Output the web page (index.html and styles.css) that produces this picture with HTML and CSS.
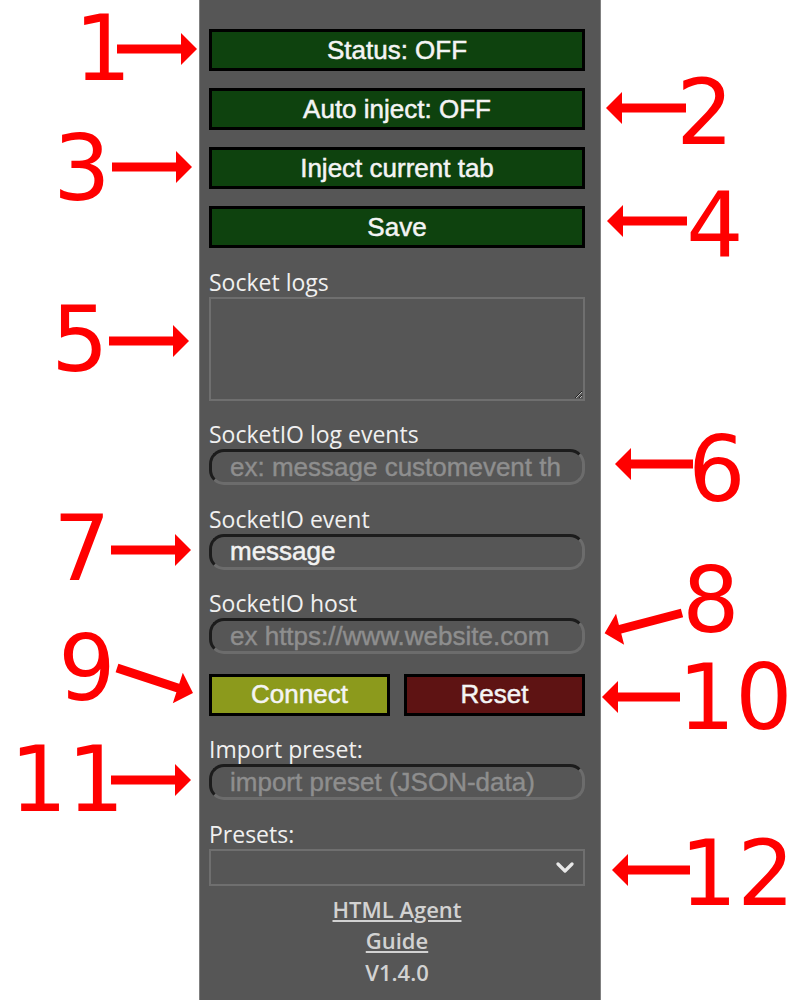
FILE: index.html
```html
<!DOCTYPE html>
<html lang="en">
<head>
<meta charset="utf-8">
<title>HTML Agent</title>
<link rel="stylesheet" href="styles.css">
</head>
<body>
<div class="page">
  <main class="panel">
    <div class="btn-stack">
      <button class="btn green">Status: OFF</button>
      <button class="btn green">Auto inject: OFF</button>
      <button class="btn green">Inject current tab</button>
      <button class="btn green">Save</button>
    </div>
    <div class="fields">
      <div class="field">
        <label class="lbl">Socket logs</label>
        <textarea class="logs"></textarea>
      </div>
      <div class="field">
        <label class="lbl">SocketIO log events</label>
        <input class="inp" type="text" placeholder="ex: message customevent th">
      </div>
      <div class="field">
        <label class="lbl">SocketIO event</label>
        <input class="inp" type="text" value="message">
      </div>
      <div class="field">
        <label class="lbl">SocketIO host</label>
        <input class="inp" type="text" placeholder="ex https://www.website.com">
      </div>
      <div class="btn-row">
        <button class="btn olive">Connect</button>
        <button class="btn red">Reset</button>
      </div>
      <div class="field">
        <label class="lbl">Import preset:</label>
        <input class="inp" type="text" placeholder="import preset (JSON-data)">
      </div>
      <div class="field">
        <label class="lbl">Presets:</label>
        <div class="select-wrap">
          <select class="sel"><option></option></select>
          <svg class="chev" width="18" height="12" viewBox="0 0 18 12"><path d="M2 2 L9 9 L16 2" fill="none" stroke="#e8e8e8" stroke-width="3.2" stroke-linecap="round" stroke-linejoin="round"/></svg>
        </div>
      </div>
    </div>
    <footer class="foot">
      <a class="link" href="#">HTML Agent</a>
      <a class="link" href="#">Guide</a>
      <span class="ver">V1.4.0</span>
    </footer>
  </main>

  <svg class="notes" width="800" height="1000" viewBox="0 0 800 1000">
    <defs>
      <path id="arr80" d="M0 -4.5 H64 V-16 L80 0 L64 16 V4.5 H0 Z"/>
      <path id="arr78" d="M0 -4.5 H62 V-16 L78 0 L62 16 V4.5 H0 Z"/>
    </defs>
    <g class="arrows">
      <use href="#arr80" transform="translate(117 49)"/>
      <use href="#arr80" transform="translate(686 108) rotate(180)"/>
      <use href="#arr80" transform="translate(112 167)"/>
      <use href="#arr80" transform="translate(687 221) rotate(180)"/>
      <use href="#arr80" transform="translate(109 341)"/>
      <use href="#arr78" transform="translate(693 464) rotate(180)"/>
      <use href="#arr80" transform="translate(111 550)"/>
      <use href="#arr80" transform="translate(682 613) rotate(165.3)"/>
      <use href="#arr80" transform="translate(117 668) rotate(18.2)"/>
      <use href="#arr78" transform="translate(680 697) rotate(180)"/>
      <use href="#arr80" transform="translate(111 780)"/>
      <use href="#arr78" transform="translate(690 870) rotate(180)"/>
    </g>
    <g class="nums">
      <text x="103" y="80" text-anchor="middle">1</text>
      <text x="705" y="144" text-anchor="middle">2</text>
      <text x="82" y="200" text-anchor="middle">3</text>
      <text x="715" y="257" text-anchor="middle">4</text>
      <text x="80" y="371" text-anchor="middle">5</text>
      <text x="717" y="501" text-anchor="middle">6</text>
      <text x="82" y="580" text-anchor="middle">7</text>
      <text x="711" y="632" text-anchor="middle">8</text>
      <text x="87" y="700" text-anchor="middle">9</text>
      <text x="678" y="729">10</text>
      <text x="10" y="811">11</text>
      <text x="680" y="905">12</text>
    </g>
  </svg>
</div>
</body>
</html>
```

FILE: styles.css
```css
html, body {
  margin: 0;
  padding: 0;
  background: #ffffff;
  overflow: hidden;
}

.page {
  position: relative;
  width: 800px;
  height: 1000px;
  display: flex;
  justify-content: center;
}

.panel {
  box-sizing: border-box;
  width: 402px;
  height: 1000px;
  border-left: 1px solid #808080;
  border-right: 1px solid #808080;
  background: #565656;
  padding: 29px 15px 0 9px;
  display: flex;
  flex-direction: column;
}

.btn-stack {
  display: flex;
  flex-direction: column;
  gap: 17px;
}

.btn {
  box-sizing: border-box;
  height: 42px;
  width: 100%;
  margin: 0;
  padding: 0;
  border: 3px solid #000000;
  font-family: "Liberation Sans", Arial, sans-serif;
  font-size: 26px;
  color: #f4f4f4;
  -webkit-text-stroke: 0.5px #f4f4f4;
  cursor: pointer;
}

.green { background: #0e420e; }
.olive { background: #8c9a1c; }
.red { background: #5e1313; }

.fields {
  margin-top: 19.5px;
  display: flex;
  flex-direction: column;
  gap: 19.5px;
}

.field {
  display: flex;
  flex-direction: column;
}

.lbl {
  display: block;
  font-family: "Open Sans", "Noto Sans", sans-serif;
  font-size: 23px;
  line-height: 28px;
  color: #f0f0f0;
  margin-bottom: 1px;
}

.logs {
  box-sizing: border-box;
  width: 100%;
  height: 104px;
  margin: 0;
  border: 2px solid #6f6f6f;
  background: #565656;
  color: #eeeeee;
}

.inp {
  box-sizing: border-box;
  width: 100%;
  height: 36px;
  margin: 0;
  padding: 0 18px;
  border: 3px solid;
  border-color: #1c1c1c #6c6c6c #6c6c6c #1c1c1c;
  border-radius: 15px;
  background: #565656;
  font-family: "Liberation Sans", Arial, sans-serif;
  font-size: 26px;
  color: #f2f2f2;
  -webkit-text-stroke: 0.5px #f2f2f2;
  outline: none;
}

.inp::placeholder {
  color: #8e8e8e;
  -webkit-text-stroke: 0.4px #8e8e8e;
}

.btn-row {
  display: grid;
  grid-template-columns: 1fr 1fr;
  gap: 14px;
}

.select-wrap {
  position: relative;
}

.sel {
  box-sizing: border-box;
  display: block;
  width: 100%;
  height: 37px;
  margin: 0;
  border: 2px solid #6f6f6f;
  border-radius: 0;
  background: #565656;
  appearance: none;
  -webkit-appearance: none;
  color: #eeeeee;
}

.chev {
  position: absolute;
  right: 11px;
  top: 13px;
}

.foot {
  margin-top: 8px;
  display: flex;
  flex-direction: column;
  align-items: center;
  font-family: "Open Sans", "Noto Sans", sans-serif;
  font-size: 22px;
  font-weight: 600;
  line-height: 31.5px;
  color: #d2d2d2;
}

.link {
  color: #d2d2d2;
  text-decoration: underline;
  text-underline-offset: 2px;
}

.ver {
  color: #d2d2d2;
}

.notes {
  position: absolute;
  left: 0;
  top: 0;
  pointer-events: none;
}

.arrows use {
  fill: #ff0000;
}

.nums text {
  font-family: "DejaVu Sans", sans-serif;
  font-size: 90px;
  fill: #ff0000;
}
```
